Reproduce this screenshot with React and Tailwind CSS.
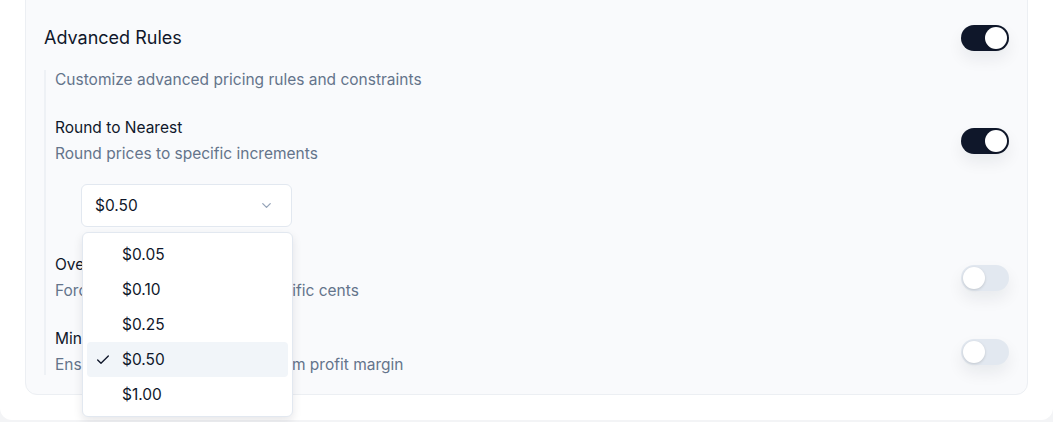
import React from "react";
import { Check, ChevronDown } from "lucide-react";

function Toggle({ on }) {
  return (
    <div
      className={
        "flex h-[26px] w-12 shrink-0 items-center rounded-full border-2 border-transparent shadow-[0_8px_16px_rgba(15,23,42,0.07)] " +
        (on ? "bg-[#0f172a]" : "bg-[#e2e8f0]")
      }
    >
      <div
        className={
          "size-[22px] rounded-full bg-white shadow-[0_1px_3px_rgba(0,0,0,0.15)] " +
          (on ? "translate-x-[22px]" : "translate-x-0")
        }
      />
    </div>
  );
}

function Row({ label, desc, on, children }) {
  return (
    <div className="flex flex-col">
      <div className="flex items-center justify-between">
        <div className="flex flex-col">
          <div className="text-[15.5px] leading-5 text-[#0f172a]">{label}</div>
          <div className="mt-[6px] text-[15.5px] leading-5 text-[#64748b]">{desc}</div>
        </div>
        <Toggle on={on} />
      </div>
      {children}
    </div>
  );
}

const options = ["$0.05", "$0.10", "$0.25", "$0.50", "$1.00"];

export default function App() {
  return (
    <div
      className="h-[422px] w-[1053px] overflow-hidden bg-[#f3f4f6]"
      style={{ fontFamily: "Inter, 'Noto Sans', sans-serif" }}
    >
      <div className="flex h-[420px] flex-col rounded-b-xl bg-white px-[25px]">
        <div className="-mt-5 rounded-xl border border-[#eceff3] bg-[#f9fafc] px-[18px] pt-[43px] pb-[19px]">
          <div className="flex items-center justify-between">
            <div className="text-lg leading-7 text-[#0f172a]">Advanced Rules</div>
            <Toggle on />
          </div>
          <div className="mt-[18px] flex flex-col gap-7 border-l-2 border-[#eef1f5] pl-[9px]">
            <div className="text-[15.5px] leading-5 text-[#64748b]">
              Customize advanced pricing rules and constraints
            </div>
            <Row label="Round to Nearest" desc="Round prices to specific increments" on>
              <div className="relative mt-5 ml-[26px] w-[211px]">
                <div className="flex h-[43px] items-center justify-between rounded-md border border-[#e2e8f0] bg-white pr-[17px] pl-[13px]">
                  <span className="text-[15.5px] text-[#0f172a]">$0.50</span>
                  <ChevronDown size={15} strokeWidth={2} className="text-[#94a3b8]" />
                </div>
                <div className="absolute top-[48px] left-px z-10 w-[211px] rounded-md border border-[#e2e8f0] bg-white p-1 shadow-[0_4px_10px_rgba(15,23,42,0.1)]">
                  {options.map((o) => (
                    <div
                      key={o}
                      className={
                        "relative flex h-[35px] items-center rounded-sm pl-[35px] text-[15.5px] text-[#0f172a] " +
                        (o === "$0.50" ? "bg-[#f1f5f9]" : "")
                      }
                    >
                      {o === "$0.50" && (
                        <Check size={16} strokeWidth={2} className="absolute left-2 text-[#0f172a]" />
                      )}
                      {o}
                    </div>
                  ))}
                </div>
              </div>
            </Row>
            <Row label="Override Cents" desc="Force all prices to end with specific cents" on={false} />
            <Row label="Minimum Margin" desc="Ensure prices maintain a minimum profit margin" on={false} />
          </div>
        </div>
      </div>
    </div>
  );
}
